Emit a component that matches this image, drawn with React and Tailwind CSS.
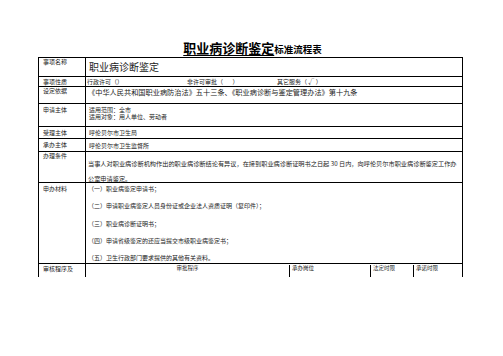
import React from 'react';

const FONT = "font-['Noto_Sans_CJK_SC','Liberation_Sans',sans-serif]";

// 申办材料 list
const MATERIALS = [
  '（一）职业病鉴定申请书；',
  '（二）申请职业病鉴定人员身份证或企业法人资质证明（复印件）；',
  '（三）职业病诊断证明书；',
  '（四）申请省级鉴定的还应当提交市级职业病鉴定书；',
  '（五）卫生行政部门要求提供的其他有关资料。',
];

function Row({ label, h, children, labelClass = 'pt-0', last = false }) {
  return (
    <div className={`flex ${h} ${last ? '' : 'border-b border-black'}`}>
      <div className={`w-[47px] shrink-0 border-r border-black pl-[4px] text-[6px] leading-[7px] ${labelClass}`}>
        {label}
      </div>
      <div className="flex-1 min-w-0">{children}</div>
    </div>
  );
}

export default function App() {
  return (
    <div className={`w-[503px] h-[356px] bg-white text-[#222] ${FONT}`}>
      {/* title */}
      <div className="h-[57px] flex items-end justify-center pl-[2px]">
        <div className="mb-[2px] flex items-end leading-[14px] font-bold">
          <span className="text-[13px] underline underline-offset-[2px] text-black">职业病诊断鉴定</span>
          <span className="text-[9.5px] leading-[12px] text-black">标准流程表</span>
        </div>
      </div>

      {/* table */}
      <div className="ml-[38px] w-[425px] border-t border-x border-black">
        <Row label="事项名称" h="h-[19px]">
          <div className="h-full flex items-center pl-[3px] text-[10px] leading-[12px]">职业病诊断鉴定</div>
        </Row>

        <Row label="事项性质" h="h-[10px]" labelClass="pt-[1px]">
          <div className="h-full flex items-center pl-[1px] text-[6px] leading-[7px] whitespace-nowrap">
            <span className="w-[100px]">行政许可（）</span>
            <span className="w-[90px]">非许可审批（&nbsp;&nbsp;&nbsp;&nbsp;&nbsp;&nbsp;&nbsp;）</span>
            <span>其它服务（ √ ）</span>
          </div>
        </Row>

        <Row label="设定依据" h="h-[17px]">
          <div className="pl-[2px] pt-[1px] text-[7.2px] leading-[8px] whitespace-nowrap">
            《中华人民共和国职业病防治法》五十三条、《职业病诊断与鉴定管理办法》第十九条
          </div>
        </Row>

        <Row label="申请主体" h="h-[23px]" labelClass="pt-[2px]">
          <div className="pl-[3px] pt-[1.5px] text-[6px] leading-[7.5px]">
            <div>适用范围：全市</div>
            <div>适用对象：用人单位、劳动者</div>
          </div>
        </Row>

        <Row label="受理主体" h="h-[12px]" labelClass="pt-[2px]">
          <div className="h-full flex items-center pl-[3px] text-[6px] leading-[7px]">呼伦贝尔市卫生局</div>
        </Row>

        <Row label="承办主体" h="h-[13px]" labelClass="pt-[2px]">
          <div className="h-full flex items-center pl-[3px] text-[6px] leading-[7px]">呼伦贝尔市卫生监督所</div>
        </Row>

        <Row label="办理条件" h="h-[31px]">
          <div className="pl-[2px] pt-[4px] text-[6.2px] leading-[15px] whitespace-nowrap">
            <div>当事人对职业病诊断机构作出的职业病诊断结论有异议，在接到职业病诊断证明书之日起 30 日内，向呼伦贝尔市职业病诊断鉴定工作办</div>
            <div>公室申请鉴定。</div>
          </div>
        </Row>

        <Row label="申办材料" h="h-[81px]" labelClass="pt-[2px]">
          <div className="flex flex-col gap-[9.3px] pl-[2px] pt-[2px] text-[6px] leading-[8px] whitespace-nowrap">
            {MATERIALS.map(m => (
              <div key={m}>{m}</div>
            ))}
          </div>
        </Row>

        <Row label="审核程序及" h="h-[13px]" labelClass="pt-[1px]" last>
          <div className="h-full flex text-[5.5px] leading-[7px] pt-[1px] whitespace-nowrap">
            <div className="w-[204px] text-center border-r border-black">审批程序</div>
            <div className="w-[81px] pl-[2px] border-r border-black">承办岗位</div>
            <div className="w-[43px] pl-[2px] border-r border-black">法定时限</div>
            <div className="flex-1 pl-[2px]">承诺时限</div>
          </div>
        </Row>
      </div>
    </div>
  );
}
